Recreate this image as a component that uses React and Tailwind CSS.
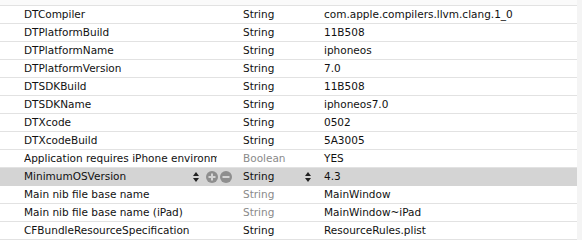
const rows = [
  { key: "DTCompiler", type: "String", value: "com.apple.compilers.llvm.clang.1_0" },
  { key: "DTPlatformBuild", type: "String", value: "11B508" },
  { key: "DTPlatformName", type: "String", value: "iphoneos" },
  { key: "DTPlatformVersion", type: "String", value: "7.0" },
  { key: "DTSDKBuild", type: "String", value: "11B508" },
  { key: "DTSDKName", type: "String", value: "iphoneos7.0" },
  { key: "DTXcode", type: "String", value: "0502" },
  { key: "DTXcodeBuild", type: "String", value: "5A3005" },
  { key: "Application requires iPhone environment", type: "Boolean", value: "YES", dim: true },
  { key: "MinimumOSVersion", type: "String", value: "4.3", selected: true },
  { key: "Main nib file base name", type: "String", value: "MainWindow", dim: true },
  { key: "Main nib file base name (iPad)", type: "String", value: "MainWindow~iPad", dim: true },
  { key: "CFBundleResourceSpecification", type: "String", value: "ResourceRules.plist" },
];

function Stepper() {
  return (
    <svg width="6" height="12" viewBox="0 0 6 12" className="shrink-0">
      <path d="M3 1 L6 5 L0 5 Z" fill="#222" />
      <path d="M3 11 L6 7 L0 7 Z" fill="#222" />
    </svg>
  );
}

function CircleBtn({ plus }) {
  return (
    <svg width="12" height="12" viewBox="0 0 12 12" className="shrink-0">
      <circle cx="6" cy="6" r="6" fill="#8e8e8e" />
      <rect x="2.5" y="5" width="7" height="2" fill="#d4d4d4" />
      {plus && <rect x="5" y="2.5" width="2" height="7" fill="#d4d4d4" />}
    </svg>
  );
}

export default function App() {
  return (
    <div className="w-[582px] h-[240px] overflow-hidden flex bg-white text-[10.5px] text-[#111] font-['DejaVu_Sans','Liberation_Sans',sans-serif]">
      <div className="w-[577px] flex flex-col">
        <div className="h-[7px] bg-[#fafafa] border-b border-[#e2e2e2]" />
        {rows.map((r) => (
          <div
            key={r.key}
            className={`h-[18px] shrink-0 flex items-center border-b ${
              r.selected ? "bg-[#d4d4d4] border-[#d4d4d4]" : "border-[#e2e2e2]"
            }`}
          >
            <div className="w-[243px] shrink-0 flex items-center pl-[24px] pr-[11px]">
              <span className="w-[193px] whitespace-nowrap overflow-hidden">{r.key}</span>
              {r.selected && (
                <div className="flex items-center ml-[-24px] gap-[2px]">
                  <Stepper />
                  <span className="w-[3px]" />
                  <CircleBtn plus />
                  <CircleBtn />
                </div>
              )}
            </div>
            <div className={`w-[68px] shrink-0 flex items-center ${r.dim ? "text-[#8a8a8a]" : ""}`}>
              <span className="flex-1">{r.type}</span>
              {r.selected && <Stepper />}
            </div>
            <div className="flex-1 pl-[13px] whitespace-nowrap overflow-hidden">{r.value}</div>
          </div>
        ))}
      </div>
      <div className="flex-1 bg-[#f4f4f4]" />
    </div>
  );
}
